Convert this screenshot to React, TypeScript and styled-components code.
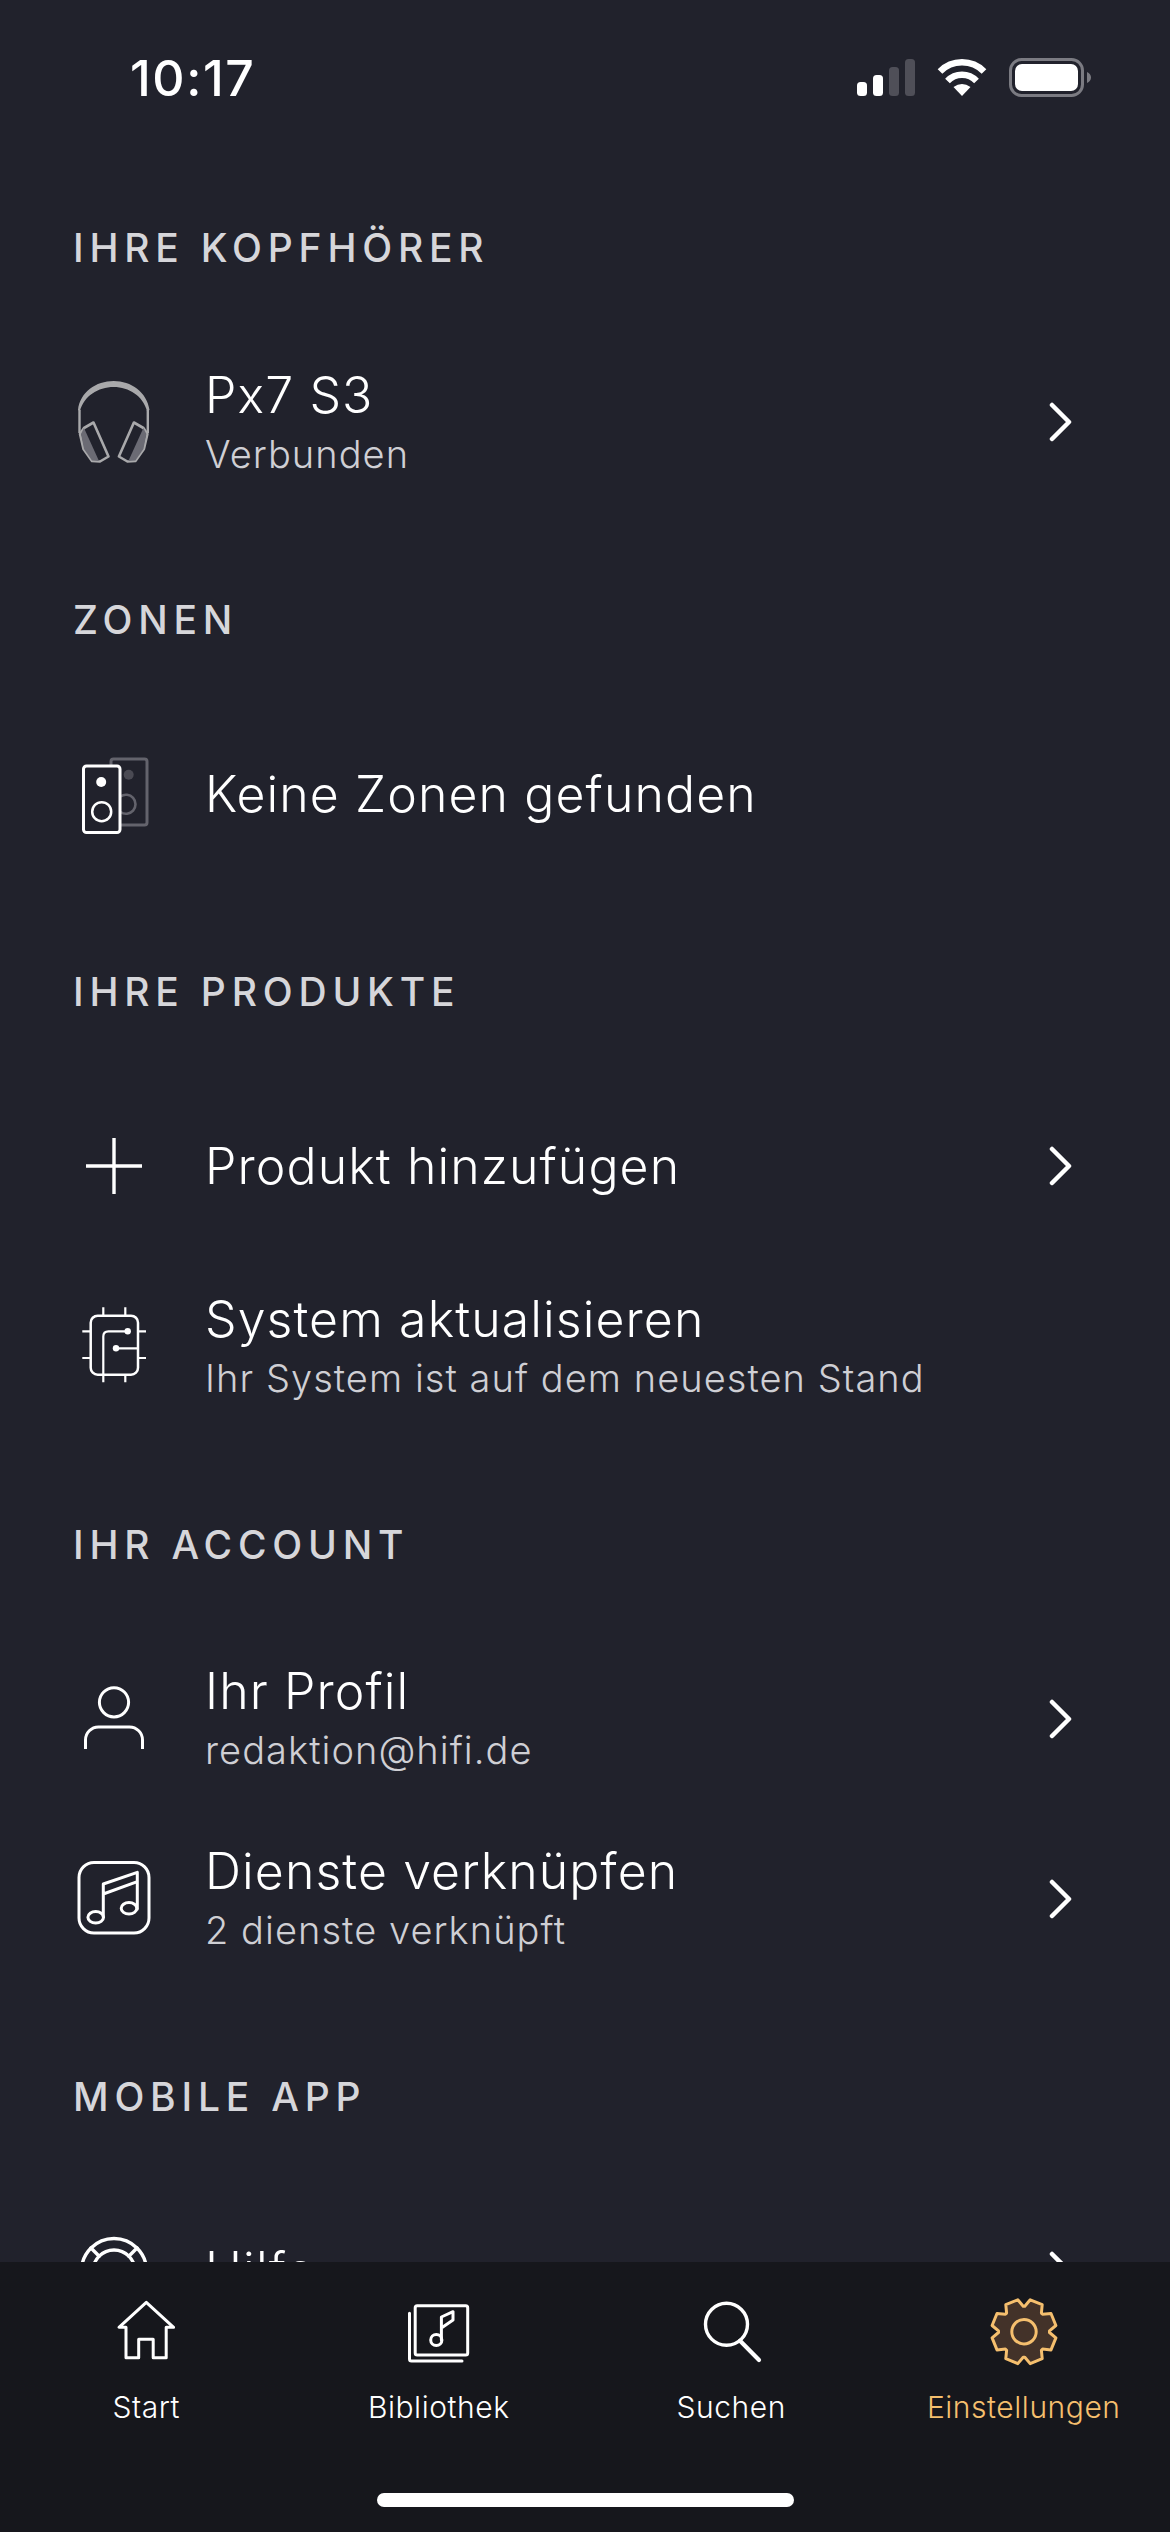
import React from "react";
import styled, { createGlobalStyle } from "styled-components";

const GlobalStyle = createGlobalStyle`
  html, body {
    margin: 0;
    padding: 0;
    background: #21222c;
  }
  * {
    box-sizing: border-box;
  }
`;

const Phone = styled.div`
  width: 1170px;
  height: 2532px;
  display: flex;
  flex-direction: column;
  overflow: hidden;
  background: #21222c;
  color: #ffffff;
  font-family: Inter, "Liberation Sans", sans-serif;
`;

const StatusBar = styled.div`
  flex: none;
  height: 203px;
  display: flex;
  justify-content: space-between;
  align-items: flex-start;
  padding: 48px 79px 0 130px;
`;

const Clock = styled.div`
  font-size: 50px;
  line-height: 60px;
  font-weight: 500;
  letter-spacing: 1.6px;
`;

const StatusIcons = styled.div`
  display: flex;
  align-items: center;
  gap: 22px;
  padding-top: 10px;
`;

const Scroller = styled.div`
  flex: 1;
  min-height: 0;
  overflow: hidden;
`;

const SectionLabel = styled.h2`
  margin: 0;
  height: 90px;
  padding: 0 0 0 73px;
  font-size: 39px;
  line-height: 90px;
  font-weight: 500;
  letter-spacing: 5.8px;
  color: #d6d6da;
`;

const Section = styled.section`
  padding-bottom: 63.2px;
`;

const Rows = styled.div`
  display: flex;
  flex-direction: column;
  padding-top: 39px;
`;

const Row = styled.div`
  height: 180px;
  display: flex;
  align-items: center;
  padding: 0 97px 0 69px;
`;

const RowIcon = styled.svg`
  flex: none;
  width: 90px;
  height: 90px;
`;

const RowText = styled.div`
  flex: 1;
  min-width: 0;
  margin-left: 46px;
  padding-bottom: 1px;
`;

const RowTitle = styled.div`
  font-size: 50px;
  line-height: 60px;
  font-weight: 350;
  letter-spacing: 1.1px;
`;

const RowSubtitle = styled.div`
  margin-top: 4px;
  font-size: 38px;
  line-height: 50px;
  font-weight: 350;
  letter-spacing: 1.05px;
  color: #cfcfd4;
`;

const Chevron = styled.svg`
  flex: none;
  width: 24px;
  height: 40px;
`;

const TabBar = styled.nav`
  flex: none;
  height: 270px;
  display: grid;
  grid-template-columns: repeat(4, 1fr);
  align-items: start;
  position: relative;
  padding-top: 35px;
  background: #16171c;
`;

const Tab = styled.div<{ $active?: boolean }>`
  display: flex;
  flex-direction: column;
  align-items: center;
  gap: 22px;
  font-size: 30px;
  line-height: 36px;
  font-weight: 350;
  letter-spacing: 0.55px;
  color: ${(props) => (props.$active ? "#f5bf6e" : "#ffffff")};
`;

const TabIcon = styled.svg`
  width: 70px;
  height: 70px;
  display: block;
`;

const HomeIndicator = styled.div`
  position: absolute;
  left: 377px;
  bottom: 25px;
  width: 417px;
  height: 14px;
  border-radius: 7px;
  background: #ffffff;
`;

const line = {
  fill: "none",
  stroke: "#ffffff",
  strokeWidth: 3,
  strokeLinecap: "round",
  strokeLinejoin: "round",
} as const;

function ChevronRight() {
  return (
    <Chevron viewBox="0 0 24 40">
      <path d="M3 3L20 20L3 37" fill="none" stroke="#ffffff" strokeWidth="4.5" strokeLinecap="round" strokeLinejoin="round" />
    </Chevron>
  );
}

function Headphones() {
  const cup = (
    <>
      <path d="M15 51L24.5 45.5L39.5 79.5L31 84.5L23 84L14.5 72L11 57Z" fill="none" stroke="#a9a9ab" strokeWidth="2.6" strokeLinejoin="round" />
      <path d="M15 51L30 84L23 83.5L15 72L12 57Z" fill="#6b6b74" />
    </>
  );
  return (
    <RowIcon viewBox="0 0 90 90">
      <path d="M9 33C11 15 27 4 44.7 4C62 4 78 15 80.5 33L78 34C74 19 60 10 44.7 10C29 10 15 19 11 34Z" fill="#a9a9ab" />
      <path d="M10.5 33V56M78.8 33V56" fill="none" stroke="#a9a9ab" strokeWidth="2.4" />
      {cup}
      <g transform="translate(89.4 0) scale(-1 1)">{cup}</g>
    </RowIcon>
  );
}

function Speakers() {
  return (
    <RowIcon viewBox="0 0 90 90">
      <path d="M42 17V12.5A2.5 2.5 0 0 1 44.5 10H75.5A2.5 2.5 0 0 1 78 12.5V73.5A2.5 2.5 0 0 1 75.5 76H51.5" fill="none" stroke="#63636c" strokeWidth="3" />
      <circle cx="59.7" cy="25.7" r="5" fill="#4a4a53" />
      <path d="M51.5 47.5A9.5 9.5 0 1 1 51.5 63" fill="none" stroke="#63636c" strokeWidth="2.6" />
      <rect x="14.5" y="17" width="36.5" height="66.5" rx="3" {...line} />
      <circle cx="32.2" cy="33" r="5" fill="#ffffff" />
      <circle cx="32.7" cy="62.7" r="9.5" {...line} strokeWidth="2.5" />
    </RowIcon>
  );
}

function Plus() {
  return (
    <RowIcon viewBox="0 0 90 90">
      <path d="M17 45H73M45 17V73" fill="none" stroke="#ffffff" strokeWidth="3.4" />
    </RowIcon>
  );
}

function Chip() {
  return (
    <RowIcon viewBox="0 0 90 90">
      <rect x="21.7" y="14.7" width="47.3" height="59" rx="7" {...line} strokeWidth="2.5" />
      <path
        d="M34.3 6.3V14.7M56.3 6.3V14.7M56.3 73.7V81.3M13.3 30.3H21.7M13.3 57H21.7M69 30.3H77M69 57H77M34.3 81.3V35.6Q34.3 30.3 39.5 30.3H58.7M47 47.3H69"
        fill="none"
        stroke="#ffffff"
        strokeWidth="2.2"
      />
      <circle cx="58.7" cy="30.3" r="3.2" fill="#ffffff" />
      <circle cx="47" cy="47.3" r="3.2" fill="#ffffff" />
    </RowIcon>
  );
}

function Person() {
  return (
    <RowIcon viewBox="0 0 90 90">
      <circle cx="45" cy="28.3" r="14.6" {...line} />
      <path d="M16.5 75V66A13 13 0 0 1 29.5 53H60.5A13 13 0 0 1 73.5 66V75" fill="none" stroke="#ffffff" strokeWidth="3" />
    </RowIcon>
  );
}

function MusicSquare() {
  return (
    <RowIcon viewBox="0 0 90 90">
      <rect x="10" y="8.5" width="70" height="70.5" rx="15" {...line} />
      <ellipse cx="26.7" cy="63.3" rx="7.8" ry="5.8" {...line} />
      <ellipse cx="60" cy="54.3" rx="7.8" ry="5.8" {...line} />
      <path d="M34.3 63V30L68.3 18.3V55M34.3 40L68.3 27.7" {...line} />
    </RowIcon>
  );
}

function Lifebuoy() {
  return (
    <RowIcon viewBox="0 0 90 90">
      <circle cx="45" cy="45" r="32.5" {...line} strokeWidth="3.4" />
      <circle cx="45" cy="45" r="21" {...line} strokeWidth="3.4" />
      <path d="M30.2 30.2L22 22M59.8 30.2L68 22M30.2 59.8L22 68M59.8 59.8L68 68" {...line} strokeWidth="3.4" />
    </RowIcon>
  );
}

function HomeIcon() {
  return (
    <TabIcon viewBox="0 0 70 70">
      <path d="M35.3 5.3L8 30.3H15V60.7H27.7V42.3H42.2V60.7H55.2V30.3H62.6Z" {...line} />
    </TabIcon>
  );
}

function LibraryIcon() {
  return (
    <TabIcon viewBox="0 0 70 70">
      <rect x="11.2" y="8.7" width="52.5" height="49.3" rx="2" {...line} />
      <path d="M5.5 16.3V62A2 2 0 0 0 7.5 64H58" {...line} />
      <circle cx="32.3" cy="43" r="5.6" {...line} />
      <path d="M37.4 43V20L49 14.7V23L37.4 31" {...line} />
    </TabIcon>
  );
}

function SearchIcon() {
  return (
    <TabIcon viewBox="0 0 70 70">
      <circle cx="30.5" cy="27.3" r="21" {...line} strokeWidth="3.4" />
      <path d="M44 43.7L63 63" {...line} strokeWidth="4.2" />
    </TabIcon>
  );
}

// Zahnrad: 8 Zähne, um 22.5 Grad gedreht wie im Original
function gearPath(cx: number, cy: number, outer: number, inner: number) {
  const points: string[] = [];
  for (let i = 0; i < 8; i++) {
    const mid = ((22.5 + i * 45) * Math.PI) / 180;
    const corners: [number, number][] = [
      [inner, -0.36],
      [outer, -0.2],
      [outer, 0.2],
      [inner, 0.36],
    ];
    corners.forEach(([r, offset]) => {
      const x = cx + r * Math.cos(mid + offset);
      const y = cy + r * Math.sin(mid + offset);
      points.push(`${x.toFixed(1)} ${y.toFixed(1)}`);
    });
  }
  return `M${points.join("L")}Z`;
}

function GearIcon() {
  return (
    <TabIcon viewBox="0 0 70 70">
      <path d={gearPath(35, 34.7, 32.5, 25.5)} fill="#433229" stroke="#f5bf6e" strokeWidth="3" strokeLinejoin="round" />
      <circle cx="35" cy="34.7" r="12.2" fill="none" stroke="#f5bf6e" strokeWidth="3" />
    </TabIcon>
  );
}

function SignalIcon() {
  return (
    <svg width="58" height="37" viewBox="0 0 58 37">
      <rect x="0" y="23" width="10" height="14" rx="3.5" fill="#ffffff" />
      <rect x="16" y="16" width="10" height="21" rx="3.5" fill="#ffffff" />
      <rect x="32" y="8" width="10" height="29" rx="3.5" fill="#4f4f58" />
      <rect x="48" y="0" width="10" height="37" rx="3.5" fill="#4f4f58" />
    </svg>
  );
}

function WifiIcon() {
  return (
    <svg width="50" height="37" viewBox="0 0 50 37">
      <path d="M3 12.5A31 31 0 0 1 47 12.5" fill="none" stroke="#ffffff" strokeWidth="6.5" />
      <path d="M10.5 22A20 20 0 0 1 39.5 22" fill="none" stroke="#ffffff" strokeWidth="6.5" />
      <path d="M25 37L16.5 28Q25 22 33.5 28Z" fill="#ffffff" />
    </svg>
  );
}

function BatteryIcon() {
  return (
    <svg width="82" height="39" viewBox="0 0 82 39">
      <rect x="1.5" y="1.5" width="72" height="36" rx="11" fill="none" stroke="#7b7b82" strokeWidth="3" />
      <rect x="6" y="6" width="63" height="27" rx="7" fill="#ffffff" />
      <path d="M78 14C80.5 15 82 17 82 19.5C82 22 80.5 24 78 25Z" fill="#7b7b82" />
    </svg>
  );
}

type RowData = {
  icon: React.ReactNode;
  title: string;
  subtitle?: string;
  chevron?: boolean;
};

type SectionData = {
  label: string;
  rows: RowData[];
};

const sections: SectionData[] = [
  {
    label: "IHRE KOPFHÖRER",
    rows: [{ icon: <Headphones />, title: "Px7 S3", subtitle: "Verbunden", chevron: true }],
  },
  {
    label: "ZONEN",
    rows: [{ icon: <Speakers />, title: "Keine Zonen gefunden" }],
  },
  {
    label: "IHRE PRODUKTE",
    rows: [
      { icon: <Plus />, title: "Produkt hinzufügen", chevron: true },
      { icon: <Chip />, title: "System aktualisieren", subtitle: "Ihr System ist auf dem neuesten Stand" },
    ],
  },
  {
    label: "IHR ACCOUNT",
    rows: [
      { icon: <Person />, title: "Ihr Profil", subtitle: "redaktion@hifi.de", chevron: true },
      { icon: <MusicSquare />, title: "Dienste verknüpfen", subtitle: "2 dienste verknüpft", chevron: true },
    ],
  },
  {
    label: "MOBILE APP",
    rows: [{ icon: <Lifebuoy />, title: "Hilfe", chevron: true }],
  },
];

const tabs = [
  { label: "Start", icon: <HomeIcon /> },
  { label: "Bibliothek", icon: <LibraryIcon /> },
  { label: "Suchen", icon: <SearchIcon /> },
  { label: "Einstellungen", icon: <GearIcon />, active: true },
];

export default function App() {
  return (
    <Phone>
      <GlobalStyle />
      <StatusBar>
        <Clock>10:17</Clock>
        <StatusIcons>
          <SignalIcon />
          <WifiIcon />
          <BatteryIcon />
        </StatusIcons>
      </StatusBar>
      <Scroller>
        {sections.map((section) => (
          <Section key={section.label}>
            <SectionLabel>{section.label}</SectionLabel>
            <Rows>
              {section.rows.map((row) => (
                <Row key={row.title}>
                  {row.icon}
                  <RowText>
                    <RowTitle>{row.title}</RowTitle>
                    {row.subtitle && <RowSubtitle>{row.subtitle}</RowSubtitle>}
                  </RowText>
                  {row.chevron && <ChevronRight />}
                </Row>
              ))}
            </Rows>
          </Section>
        ))}
      </Scroller>
      <TabBar>
        {tabs.map((tab) => (
          <Tab key={tab.label} $active={tab.active}>
            {tab.icon}
            {tab.label}
          </Tab>
        ))}
        <HomeIndicator />
      </TabBar>
    </Phone>
  );
}
